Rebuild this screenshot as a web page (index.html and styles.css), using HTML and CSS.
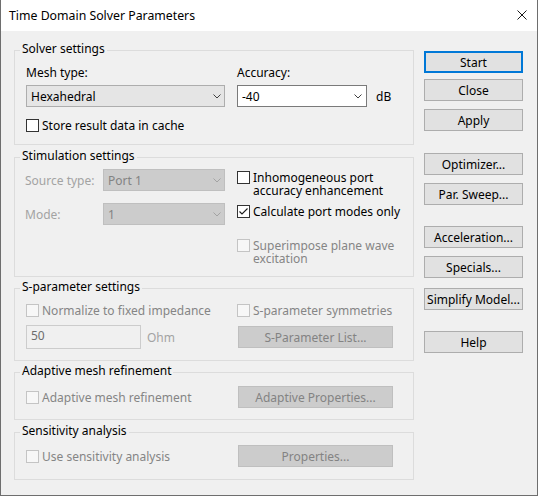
FILE: index.html
```html
<!DOCTYPE html>
<html>
<head>
<meta charset="utf-8">
<title>Time Domain Solver Parameters</title>
<link rel="stylesheet" href="styles.css">
</head>
<body>
<div class="window">
  <div class="titlebar">
    <span class="title">Time Domain Solver Parameters</span>
    <svg class="close-x" width="10" height="10" viewBox="0 0 10 10"><path d="M0.5 0.5L9.5 9.5M9.5 0.5L0.5 9.5" stroke="#1a1a1a" stroke-width="1" fill="none"/></svg>
  </div>
  <div class="content">
    <div class="groups">
      <fieldset class="group">
        <legend>Solver settings</legend>
        <div class="gbody solver-body">
          <div class="solver-row">
            <div class="field mesh-field">
              <div class="lbl">Mesh type:</div>
              <div class="combo combo-mesh"><span class="combo-text">Hexahedral</span><svg class="chev" width="8" height="5" viewBox="0 0 8 5"><path d="M0.5 0.5L4 4L7.5 0.5" stroke="#404040" fill="none"/></svg></div>
            </div>
            <div class="field acc-field">
              <div class="lbl">Accuracy:</div>
              <div class="acc-row">
                <div class="combo combo-edit"><span class="combo-text">-40</span><svg class="chev" width="8" height="5" viewBox="0 0 8 5"><path d="M0.5 0.5L4 4L7.5 0.5" stroke="#404040" fill="none"/></svg></div>
                <span class="unit">dB</span>
              </div>
            </div>
          </div>
          <div class="check check-store"><span class="box"></span><span class="ctext">Store result data in cache</span></div>
        </div>
      </fieldset>

      <fieldset class="group group-stim">
        <legend>Stimulation settings</legend>
        <div class="gbody stim-body">
          <div class="stim-left">
            <div class="stim-row stim-row-first">
              <span class="dlbl">Source type:</span>
              <div class="combo combo-dis"><span class="combo-text">Port 1</span><svg class="chev" width="8" height="5" viewBox="0 0 8 5"><path d="M0.5 0.5L4 4L7.5 0.5" stroke="#a3a3a3" fill="none"/></svg></div>
            </div>
            <div class="stim-row stim-row-second">
              <span class="dlbl">Mode:</span>
              <div class="combo combo-dis"><span class="combo-text">1</span><svg class="chev" width="8" height="5" viewBox="0 0 8 5"><path d="M0.5 0.5L4 4L7.5 0.5" stroke="#a3a3a3" fill="none"/></svg></div>
            </div>
          </div>
          <div class="stim-right">
            <div class="check check-inhom"><span class="box"></span><span class="ctext">Inhomogeneous port<br>accuracy enhancement</span></div>
            <div class="check check-calc"><span class="box box-checked"><svg width="11" height="11" viewBox="0 0 11 11"><path d="M1.5 5.5L4 8L9.5 2.5" stroke="#1a1a1a" stroke-width="1.1" fill="none"/></svg></span><span class="ctext">Calculate port modes only</span></div>
            <div class="check check-dis check-super"><span class="box"></span><span class="ctext">Superimpose plane wave<br>excitation</span></div>
          </div>
        </div>
      </fieldset>

      <fieldset class="group">
        <legend>S-parameter settings</legend>
        <div class="gbody sparam-body">
          <div class="row sp-row1">
            <div class="cell-left"><div class="check check-dis"><span class="box"></span><span class="ctext">Normalize to fixed impedance</span></div></div>
            <div class="cell-right"><div class="check check-dis"><span class="box"></span><span class="ctext">S-parameter symmetries</span></div></div>
          </div>
          <div class="row sp-row2">
            <div class="cell-left"><div class="edit-dis">50</div><span class="unit-dis">Ohm</span></div>
            <div class="cell-right"><div class="btn btn-dis">S-Parameter List...</div></div>
          </div>
        </div>
      </fieldset>

      <fieldset class="group">
        <legend>Adaptive mesh refinement</legend>
        <div class="gbody small-body">
          <div class="row small-row">
            <div class="cell-left"><div class="check check-dis"><span class="box"></span><span class="ctext">Adaptive mesh refinement</span></div></div>
            <div class="cell-right"><div class="btn btn-dis">Adaptive Properties...</div></div>
          </div>
        </div>
      </fieldset>

      <fieldset class="group group-sens">
        <legend>Sensitivity analysis</legend>
        <div class="gbody small-body">
          <div class="row small-row sens-row">
            <div class="cell-left"><div class="check check-dis"><span class="box"></span><span class="ctext">Use sensitivity analysis</span></div></div>
            <div class="cell-right"><div class="btn btn-dis">Properties...</div></div>
          </div>
        </div>
      </fieldset>
    </div>

    <div class="buttons">
      <div class="btn btn-side btn-default">Start</div>
      <div class="btn btn-side b-close">Close</div>
      <div class="btn btn-side b-apply">Apply</div>
      <div class="btn btn-side b-opt">Optimizer...</div>
      <div class="btn btn-side b-sweep">Par. Sweep...</div>
      <div class="btn btn-side b-acc">Acceleration...</div>
      <div class="btn btn-side b-spec">Specials...</div>
      <div class="btn btn-side b-simp">Simplify Model...</div>
      <div class="btn btn-side b-help">Help</div>
    </div>
  </div>
</div>
</body>
</html>
```

FILE: styles.css
```css
* { box-sizing: border-box; }

html, body {
  margin: 0;
  padding: 0;
  background: #f0f0f0;
}

body {
  font-family: "Noto Sans", "Liberation Sans", sans-serif;
  font-size: 12px;
  line-height: 15px;
  color: #000;
}

.window {
  width: 538px;
  height: 496px;
  background: #f0f0f0;
  border-left: 1px solid #6e6e6e;
  border-right: 1px solid #6e6e6e;
  border-bottom: 1px solid #6e6e6e;
  overflow: hidden;
}

.titlebar {
  height: 31px;
  background: #ffffff;
  display: flex;
  align-items: flex-start;
  padding: 8px 10px 0 8px;
}

.title {
  font-size: 12.3px;
  line-height: 15px;
  color: #000;
}

.close-x {
  margin-left: auto;
  margin-top: 2px;
  display: block;
}

.content {
  display: flex;
  padding: 11px 13px 0 13px;
}

.groups {
  width: 400px;
  display: flex;
  flex-direction: column;
}

.group {
  margin: 0;
  padding: 0;
  border: 1px solid #dcdcdc;
  min-width: 0;
}

.group + .group { margin-top: 3px; }
.group-stim, .group-sens { margin-top: 4px !important; }

.group legend {
  margin-left: 5px;
  padding: 0 2px 3px 2px;
  line-height: 14px;
  font-size: 12px;
  color: #000;
}

.gbody {
  display: flow-root;
  padding-left: 11px;
}

/* Solver settings */
.solver-body { height: 85px; }

.solver-row {
  display: flex;
  padding-top: 6px;
}

.field { display: flex; flex-direction: column; }
.mesh-field { width: 199px; }
.acc-field { margin-left: 12px; }

.lbl { line-height: 15px; height: 15px; }

.combo {
  display: flex;
  align-items: center;
  justify-content: space-between;
  height: 22px;
  border: 1px solid #adadad;
  background: #e5e5e5;
  padding: 0 3px 0 4px;
  margin-top: 5px;
}

.combo-text { line-height: 15px; }
.chev { display: block; }

.combo-mesh { width: 199px; }

.acc-row { display: flex; align-items: center; margin-top: 5px; }
.acc-row .combo { margin-top: 0; }

.combo-edit {
  width: 130px;
  background: #ffffff;
  border-color: #7a7a7a;
  padding: 0 4px 0 4px;
}

.unit { margin-left: 9px; }

.check {
  display: flex;
  align-items: flex-start;
  line-height: 13px;
}

.check .box {
  flex: none;
  width: 13px;
  height: 13px;
  border: 1px solid #333333;
  background: #ffffff;
  display: flex;
  align-items: center;
  justify-content: center;
}

.check .ctext { margin-left: 3px; }

.check-dis .box {
  border-color: #c4c4c4;
  background: #f7f7f7;
}

.check-dis .ctext { color: #858585; }

.check-store { margin-top: 12px; }

/* Stimulation */
.stim-body { height: 110px; display: flex; }

.stim-left { width: 199px; }

.stim-row {
  display: flex;
  align-items: center;
  height: 22px;
}

.stim-row-first { margin-top: 3px; }
.stim-row-second { margin-top: 12px; }

.dlbl {
  width: 77px;
  color: #a3a3a3;
  margin-left: -1px;
}

.combo-dis {
  width: 122px;
  margin-top: 0;
  margin-left: 1px;
  background: #cccccc;
  border-color: #bfbfbf;
  color: #838383;
}

.stim-right { margin-left: 12px; }

.check-inhom { margin-top: 5px; }
.check-calc { margin-top: 8px; }
.check-super { margin-top: 21px; }

/* rows with left and right cells */
.row { display: flex; align-items: center; }
.cell-left { width: 211px; display: flex; align-items: center; }
.cell-right { display: flex; align-items: center; }

.sparam-body { height: 63px; }
.sp-row1 { margin-top: 7px; align-items: flex-start; }
.sp-row2 { margin-top: 8px; }

.edit-dis {
  width: 115px;
  height: 24px;
  border: 1px solid #cccccc;
  background: #f0f0f0;
  color: #6d6d6d;
  padding: 2px 4px 0 4px;
  line-height: 15px;
}

.unit-dis {
  margin-left: 6px;
  color: #a3a3a3;
}

.btn {
  height: 22px;
  border: 1px solid #adadad;
  background: #e1e1e1;
  display: flex;
  align-items: center;
  justify-content: center;
  line-height: 15px;
  white-space: nowrap;
}

.btn-dis {
  width: 155px;
  margin-left: 1px;
  background: #cccccc;
  border-color: #bfbfbf;
  color: #838383;
}

.small-body { height: 38px; }
.small-row { margin-top: 5px; height: 22px; }
.sens-row { margin-top: 4px; }

/* right buttons */
.buttons {
  width: 99px;
  margin-left: 10px;
  padding-top: 9px;
  display: flex;
  flex-direction: column;
}

.btn-side { width: 99px; }

.btn-default {
  border: 2px solid #0078d7;
}

.b-close { margin-top: 6px; }
.b-apply { margin-top: 8px; }
.b-opt { margin-top: 22px; }
.b-sweep { margin-top: 8px; }
.b-acc { margin-top: 21px; }
.b-spec { margin-top: 8px; }
.b-simp { margin-top: 10px; }
.b-help { margin-top: 21px; }
```
